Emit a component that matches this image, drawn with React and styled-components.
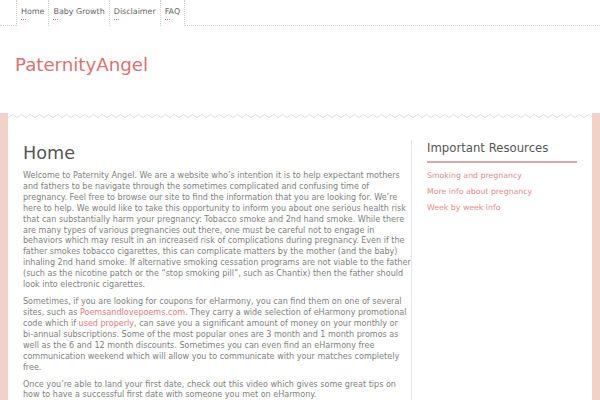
import React from "react";
import styled, { createGlobalStyle } from "styled-components";

const GlobalStyle = createGlobalStyle`
  html, body { margin: 0; padding: 0; background: #fff; }
  body { font-family: "DejaVu Sans", "Liberation Sans", sans-serif; }
  * { box-sizing: border-box; }
`;

const Page = styled.div`
  width: 600px;
  height: 400px;
  overflow: hidden;
  background: #fff;
`;

const TopNav = styled.nav`
  display: flex;
  height: 26px;
`;

const NavLead = styled.div`
  width: 16px;
  min-width: 16px;
  flex: none;
  border-bottom: 1px dotted #cfcfcf;
`;

const NavFill = styled.div`
  flex: 1;
  border-bottom: 1px dotted #cfcfcf;
`;

const NavItem = styled.a`
  position: relative;
  flex: none;
  display: flex;
  align-items: center;
  padding: 0 4px 4px 4px;
  border-left: 1px dotted #cfcfcf;
  border-right: ${(p) => (p.$last ? "1px dotted #cfcfcf" : "none")};
  font-size: 7.95px;
  color: #666;
  text-decoration: none;
  white-space: nowrap;
`;

const NavDash = styled.span`
  position: absolute;
  left: 4px;
  top: 19px;
  width: 6px;
  height: 1px;
  background: repeating-linear-gradient(90deg, #e07070 0 1px, transparent 1px 2px);
`;

const Header = styled.header`
  height: 87px;
  padding: 29px 0 0 15px;
`;

const SiteTitle = styled.h1`
  margin: 0;
  font-size: 18.2px;
  font-weight: normal;
  line-height: 20px;
  color: #d97272;
`;

const Body = styled.div`
  background: #f1d2c9;
  padding: 0 8px;
  height: 288px;
`;

const Sheet = styled.div`
  background: #fff;
  height: 100%;
`;

const Zigzag = styled.svg`
  display: block;
  width: 584px;
  height: 6px;
`;

const Columns = styled.div`
  display: flex;
  padding-top: 21px;
`;

const Main = styled.main`
  width: 403px;
  flex: none;
  padding: 0 14px 0 15px;
`;

const PageTitle = styled.h2`
  margin: 0 0 5px 0;
  font-size: 17.6px;
  font-weight: normal;
  line-height: 26px;
  color: #555;
`;

const Para = styled.p`
  margin: 0 0 6.1px 0;
  font-size: 8.05px;
  line-height: 10.9px;
  color: #808080;
`;

const Line = styled.span`
  display: block;
  white-space: nowrap;
`;

const TextLink = styled.a`
  color: #e07b7b;
  text-decoration: none;
`;

const Sidebar = styled.aside`
  border-left: 1px solid #e8e8e8;
  padding: 0 15px 0 15px;
  width: 181px;
  height: 300px;
`;

const WidgetTitle = styled.h3`
  margin: 0;
  padding-bottom: 4px;
  font-size: 11.7px;
  font-weight: normal;
  line-height: 17px;
  color: #555;
  border-bottom: 2px solid #dda7a7;
`;

const LinkList = styled.ul`
  list-style: none;
  margin: 5px 0 0 0;
  padding: 0;
`;

const LinkItem = styled.li`
  font-size: 7.8px;
  line-height: 16px;
  a { color: #e38c8c; text-decoration: none; }
`;

function ZigzagLine() {
  const period = 9;
  const pts = [];
  for (let x = 0; x <= 584 + period; x += period / 2) {
    pts.push(`${x},${(x / (period / 2)) % 2 === 0 ? 4.5 : 1.5}`);
  }
  return (
    <Zigzag viewBox="0 0 584 6" preserveAspectRatio="none">
      <polyline points={pts.join(" ")} fill="none" stroke="#dcdcdc" strokeWidth="1" />
    </Zigzag>
  );
}

const navItems = ["Home", "Baby Growth", "Disclaimer", "FAQ"];

const para1 = [
  "Welcome to Paternity Angel. We are a website who’s intention it is to help expectant mothers",
  "and fathers to be navigate through the sometimes complicated and confusing time of",
  "pregnancy. Feel free to browse our site to find the information that you are looking for. We’re",
  "here to help. We would like to take this opportunity to inform you about one serious health risk",
  "that can substantially harm your pregnancy: Tobacco smoke and 2nd hand smoke. While there",
  "are many types of various pregnancies out there, one must be careful not to engage in",
  "behaviors which may result in an increased risk of complications during pregnancy. Even if the",
  "father smokes tobacco cigarettes, this can complicate matters by the mother (and the baby)",
  "inhaling 2nd hand smoke. If alternative smoking cessation programs are not viable to the father",
  "(such as the nicotine patch or the “stop smoking pill”, such as Chantix) then the father should",
  "look into electronic cigarettes.",
];

const para3 = [
  "Once you’re able to land your first date, check out this video which gives some great tips on",
  "how to have a successful first date with someone you met on eHarmony.",
];

export default function App() {
  return (
    <Page>
      <GlobalStyle />
      <TopNav>
        <NavLead />
        {navItems.map((n, i) => (
          <NavItem key={n} href="#" $last={i === navItems.length - 1}>
            {n}
            <NavDash />
          </NavItem>
        ))}
        <NavFill />
      </TopNav>
      <Header>
        <SiteTitle>PaternityAngel</SiteTitle>
      </Header>
      <Body>
        <Sheet>
          <ZigzagLine />
          <Columns>
            <Main>
              <PageTitle>Home</PageTitle>
              <Para>
                {para1.map((l) => (
                  <Line key={l}>{l}</Line>
                ))}
              </Para>
              <Para>
                <Line>Sometimes, if you are looking for coupons for eHarmony, you can find them on one of several</Line>
                <Line>
                  sites, such as <TextLink href="#">Poemsandlovepoems.com</TextLink>. They carry a wide selection of eHarmony promotional
                </Line>
                <Line>
                  code which if <TextLink href="#">used properly</TextLink>, can save you a significant amount of money on your monthly or
                </Line>
                <Line>bi-annual subscriptions. Some of the most popular ones are 3 month and 1 month promos as</Line>
                <Line>well as the 6 and 12 month discounts. Sometimes you can even find an eHarmony free</Line>
                <Line>communication weekend which will allow you to communicate with your matches completely</Line>
                <Line>free.</Line>
              </Para>
              <Para>
                {para3.map((l) => (
                  <Line key={l}>{l}</Line>
                ))}
              </Para>
            </Main>
            <Sidebar>
              <WidgetTitle>Important Resources</WidgetTitle>
              <LinkList>
                <LinkItem><a href="#">Smoking and pregnancy</a></LinkItem>
                <LinkItem><a href="#">More info about pregnancy</a></LinkItem>
                <LinkItem><a href="#">Week by week info</a></LinkItem>
              </LinkList>
            </Sidebar>
          </Columns>
        </Sheet>
      </Body>
    </Page>
  );
}
